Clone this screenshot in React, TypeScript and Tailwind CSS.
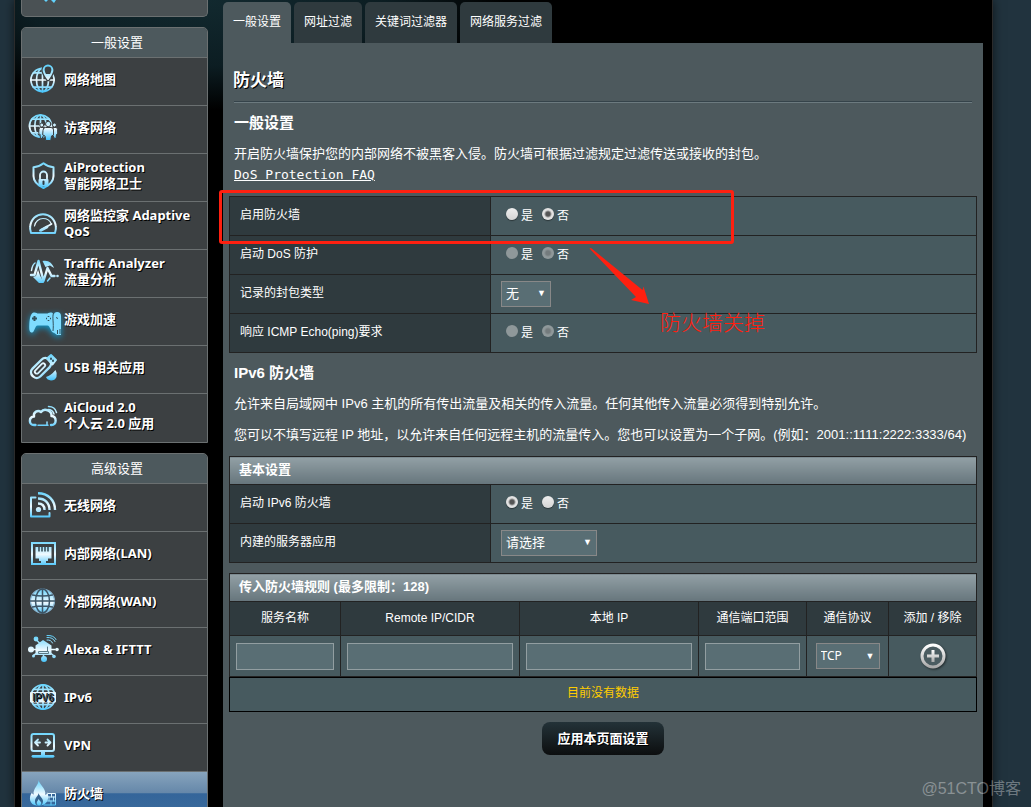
import type { ReactNode } from "react";

const FILL = "url(#ice)";

function Icon({ children }: { children: ReactNode }) {
  return (
    <svg
      viewBox="0 0 32 32"
      className="h-8 w-8 shrink-0 overflow-visible"
      fill="none"
      stroke={FILL}
      strokeWidth="2"
      strokeLinecap="round"
      strokeLinejoin="round"
      aria-hidden="true"
    >
      {children}
    </svg>
  );
}

function Globe({ x, y, r }: { x: number; y: number; r: number }) {
  const h = r * 0.62;
  const c = Math.sqrt(r * r - h * h);
  return (
    <g strokeWidth="1.700">
      <circle cx={x} cy={y} r={r} />
      <ellipse cx={x} cy={y} rx={r * 0.52} ry={r} />
      <path d={`M${x} ${y - r}V${y + r}M${x - r} ${y}H${x + r}M${x - c} ${y - h}H${x + c}M${x - c} ${y + h}H${x + c}`} />
    </g>
  );
}

const icons = {
  map: (
    <Icon>
      <Globe x={15.5} y={17} r={11.6} />
      <path d="M21 16C18.500 12 16.600 10 16.600 7a4.400 4.400 0 0 1 8.800 0C25.400 10 23.500 12 21 16Z" fill="#3c4042" stroke="#3c4042" strokeWidth="4.500" />
      <path d="M21 16C18.500 12 16.600 10 16.600 7a4.400 4.400 0 0 1 8.800 0C25.400 10 23.500 12 21 16Z" />
      <path d="M21 16 18.300 11h5.400Z" fill={FILL} stroke="none" />
    </Icon>
  ),
  guest: (
    <Icon>
      <Globe x={13.5} y={15} r={11} />
      <g fill={FILL} stroke="#3c4042" strokeWidth="1">
        <path d="M12 18q0-1.500 1.500-1.500h3v8l-1.500 3h-1.500l-.5-4-1-1Z" />
        <path d="M30.500 18q0-1.500-1.500-1.500h-3v8l1.500 3h1.500l.5-4 1-1Z" />
        <circle cx="14.800" cy="14" r="2" />
        <circle cx="27.500" cy="14" r="2" />
        <path d="M16 19q0-2.500 2.500-2.500h5.500q2.500 0 2.500 2.500v5l-2 1-.7 4.500h-5l-.8-4.500-2-1Z" />
        <circle cx="21.200" cy="13" r="2.700" />
      </g>
    </Icon>
  ),
  shield: (
    <Icon>
      <path d="M16.500 4.200C13 7 10 8 6.500 8.200V17c0 6 4.500 9.500 10 12 5.500-2.500 10-6 10-12V8.200C23 8 20 7 16.500 4.200Z" />
      <path d="M13 20v-4a3.500 3.500 0 0 1 7 0v4" strokeWidth="1.800" />
      <rect x="11.500" y="20" width="10" height="7.500" rx="1" fill={FILL} stroke="none" />
      <path d="M16.500 22.500v2.500" stroke="#2c3a42" strokeWidth="2" />
    </Icon>
  ),
  gauge: (
    <Icon>
      <path d="M4 26C3 23 3 20.500 3.200 19.500 4 12 9.500 7.200 16 7.200S28 12 28.800 19.500c.2 1 .2 3.500-.8 6.500Z" />
      <path d="M7.500 19c.8-4.500 4.500-7.500 8.500-7.500s7 2 8.300 5.500" strokeWidth="1.200" />
      <path d="M13 23.500 24.500 17" strokeWidth="1.800" />
      <path d="M14 23.300 20 20" strokeWidth="2.800" />
    </Icon>
  ),
  traffic: (
    <Icon>
      <path d="M4 20h3.500L11.500 6l5 20 4-13 4 8h3" strokeWidth="2.400" />
      <path d="M6 22l6 6h5l-4-7.500-2-6-2 6.500ZM15.500 6C21 4.500 25.500 8 27 13l-4-2.500-4.500 1.500Z" fill={FILL} stroke="none" />
      <path d="M4.500 15.500C5 12 6.500 9 8 8M20.500 26 23 23" strokeWidth="1.500" />
      <circle cx="30.500" cy="21" r="1.300" fill={FILL} stroke="none" />
    </Icon>
  ),
  game: (
    <svg viewBox="0 0 32 32" className="h-8 w-8 shrink-0 overflow-visible" aria-hidden="true">
      <g className="drop-shadow-[0_2px_3px_#109bd0]" fill="#7fdcff">
        <path d="M6.500 9.500C9 9 10 10.500 11 10.500h9c1 0 2-1.500 4.500-1 3 .5 4 6 4.500 12s-.5 8-2.500 8c-2.500 0-3.500-7-6-7h-10c-2.500 0-3 7-5.500 7S2 27 2.300 21.500 3.500 10.200 6.500 9.500Z" />
        <path d="M25.500 15c1-3 1.500-6 4.500-6 2.500 0 4 1.500 4 4v19h-4l-4-3Z" />
      </g>
      <g stroke="#31515e" fill="none">
        <path d="M5 15.500h5M7.500 13v5" strokeWidth="2" />
        <path d="M21.500 13v1M21.500 17v1M19 15.500h1M23 15.500h1" strokeWidth="1.600" />
        <path d="M26.500 10c-1.500 5 .5 10-.5 18M29.500 14l1 2M30.500 27v4M33 26v5" strokeWidth="1" />
      </g>
    </svg>
  ),
  usb: (
    <Icon>
      <rect x="2.500" y="11.500" width="23" height="11" rx="5" transform="rotate(-45 14 17)" strokeWidth="2.400" />
      <rect x="6.500" y="15.500" width="13" height="4" rx="2" transform="rotate(-45 13 17.500)" strokeWidth="1.800" />
      <path d="m20 7.500 4-3.500 5 5-3.500 4.500Z" fill={FILL} />
      <path d="M24 7.500v.5M26 9.500v.5" stroke="#31515e" />
      <path d="M19 26q5-1.500 9.500-7 2 3 1 7-1.500 3.500-5.500 3.500-4-.5-5-3.500Z" fill={FILL} stroke="none" />
    </Icon>
  ),
  cloud: (
    <Icon>
      <path d="M8.500 26H7c-5.500 0-5.500-8 0-8.500-1-4.500 4-7 7-4.500 3.500-4.500 11-1 10.500 4 5.500.5 5.500 9 0 9h-.5" strokeWidth="2.400" />
      <path d="M11 26.200h10M20 26v-3" strokeWidth="1.500" />
      <path d="M21 10.500c3 0 5 1.500 6 4.500M21.500 7.500c4 0 7 2 8 6" strokeWidth="1.500" />
    </Icon>
  ),
  wifi: (
    <Icon>
      <path d="M8.500 8.500H4v19h18.500V24" />
      <circle cx="11.500" cy="20.500" r="2.600" fill={FILL} stroke="none" />
      <path d="M11 14.500c4 0 6.500 2.500 6.500 6.500M11 9.500c7 0 11.500 4.500 11.500 11.500M11 4.200c10 0 17 7 17 16.800" strokeWidth="2.400" strokeLinecap="butt" />
    </Icon>
  ),
  lan: (
    <Icon>
      <rect x="5" y="6" width="23" height="21" strokeLinejoin="miter" />
      <path d="M8.500 10h16v11.500H21V24h-2v2.500h-5V24h-2v-2.500H8.500Z" fill={FILL} stroke="none" />
      <path d="M12 10v4.500M15 10v4.500M18 10v4.500M21 10v4.500" stroke="#31464f" strokeWidth="1.500" strokeLinecap="butt" />
    </Icon>
  ),
  wan: (
    <Icon>
      <circle cx="15.500" cy="16" r="12" fill={FILL} stroke="#8ab4cf" strokeWidth="1.200" />
      <g stroke="#3d5566" strokeWidth="1.500">
        <ellipse cx="15.500" cy="16" rx="7" ry="12" />
        <path d="M15.500 4v24M3.500 16h24M5.500 10q10 2 20 0M5.500 22q10-2 20 0" />
      </g>
    </Icon>
  ),
  alexa: (
    <Icon>
      <path d="M4 16.500h24M9 6.500l4 4M7 22l5-3M26 22l-4-3M16.500 20v6" strokeWidth="1.500" />
      <path d="M8.500 12.500 16 7l8.500 5.500V22h-16Z" fill={FILL} stroke="none" />
      <path d="M12 18.500h9.500v2H12ZM20.500 18v-4" stroke="#5c7b88" strokeWidth="1" />
      <circle cx="4" cy="16.500" r="3" fill={FILL} stroke="none" />
      <circle cx="9" cy="6" r="2.400" fill={FILL} stroke="none" />
      <circle cx="17" cy="26" r="3" fill={FILL} stroke="none" />
      <circle cx="6.500" cy="23" r="1.500" fill={FILL} stroke="none" />
      <circle cx="27" cy="23.500" r="1.800" fill={FILL} stroke="none" />
      <circle cx="30" cy="16.500" r="1.800" fill={FILL} stroke="none" />
      <path d="M20 7q4-.5 5.500 3M20 4.500q6-.5 8 4M20 2.500q7-.5 9 4" strokeWidth="1" />
    </Icon>
  ),
  ipv6: (
    <Icon>
      <Globe x={16} y={16} r={12.2} />
      <rect x="3" y="11" width="26" height="10.500" rx="1" fill="#e6f6fe" stroke="none" />
      <text x="16" y="20" textAnchor="middle" fontSize="10" fontWeight="700" fill="#2f4049" stroke="none" fontFamily="Liberation Sans, sans-serif">
        IPV6
      </text>
    </Icon>
  ),
  vpn: (
    <Icon>
      <rect x="4.500" y="5" width="22.500" height="17" rx="2" />
      <path d="M8 13.500h5M11 10.500l-3 3 3 3M23.500 13.500h-5M20.500 10.500l3 3-3 3" strokeWidth="1.800" />
      <path d="M16 23v4" strokeWidth="4" strokeLinecap="butt" />
      <path d="M6 27.300h20" strokeWidth="2.800" />
    </Icon>
  ),
  fire: (
    <Icon>
      <path d="M11.500 3c.5 4 7.500 8 7 15 1-.5 1.500-2 1.500-3 3 5 1 13-7 13.500H10C2 28 1.500 20 5 15.500c.5 1.500 1 2 1.500 2C6 11 12 8 11.500 3Z" fill={FILL} stroke="none" />
      <path d="M11.500 16c0 3-3.500 4.500-3.500 8s1.500 4.500 4 4.500 4-1.500 4-4.500-4-5-4.500-8Z" fill="#35648f" stroke="none" />
      <path d="M11.700 22c-1 2-2 2.500-2 4s1 2.500 2.300 2.500 2.300-1 2.300-2.500-2-2-2.600-4Z" fill={FILL} stroke="none" />
      <path d="M21 16.500h7.500v11.500H17M21 20h7.500M19 24h9.500M24.500 16.500V20M22 20v4M26.500 20v4M24 24v4" strokeWidth="1" />
    </Icon>
  ),
};

type Item = { icon: ReactNode; lines: string[]; active?: boolean };

const general: Item[] = [
  { icon: icons.map, lines: ["网络地图"] },
  { icon: icons.guest, lines: ["访客网络"] },
  { icon: icons.shield, lines: ["AiProtection", "智能网络卫士"] },
  { icon: icons.gauge, lines: ["网络监控家 Adaptive", "QoS"] },
  { icon: icons.traffic, lines: ["Traffic Analyzer", "流量分析"] },
  { icon: icons.game, lines: ["游戏加速"] },
  { icon: icons.usb, lines: ["USB 相关应用"] },
  { icon: icons.cloud, lines: ["AiCloud 2.0", "个人云 2.0 应用"] },
];

const advanced: Item[] = [
  { icon: icons.wifi, lines: ["无线网络"] },
  { icon: icons.lan, lines: ["内部网络(LAN)"] },
  { icon: icons.wan, lines: ["外部网络(WAN)"] },
  { icon: icons.alexa, lines: ["Alexa & IFTTT"] },
  { icon: icons.ipv6, lines: ["IPv6"] },
  { icon: icons.vpn, lines: ["VPN"] },
  { icon: icons.fire, lines: ["防火墙"], active: true },
];

function Menu({ title, items }: { title: string; items: Item[] }) {
  return (
    <nav className="rounded-t-[5px] border border-[#6b7071] bg-[#3c4042] pb-px">
      <h2 className="rounded-t-[4px] bg-[#4d595d] pl-[5px] text-center text-[13px] leading-[29px]">{title}</h2>
      <ul>
        {items.map((item) => (
          <li key={item.lines[0]} className="h-12 border-t border-[#6b7071]">
            <a
              href="#"
              className={
                "flex h-full items-center gap-[5px] pb-[6px] pl-[5px] font-['Noto_Sans','Noto_Sans_CJK_SC',sans-serif] text-[13px] leading-4 font-bold [text-shadow:1px_1px_0_#000] " +
                (item.active ? "bg-[linear-gradient(#87a4bd_0%,#6587a9_45%,#34659a_46%,#3c6c9c_100%)]" : "")
              }
            >
              {item.icon}
              <span className="whitespace-nowrap">
                {item.lines.map((line) => (
                  <span key={line} className="block">
                    {line}
                  </span>
                ))}
              </span>
            </a>
          </li>
        ))}
      </ul>
    </nav>
  );
}

function YesNo({ name, value, disabled }: { name: string; value?: "yes" | "no"; disabled?: boolean }) {
  const radio =
    "mb-1 h-3 w-3 appearance-none rounded-full bg-[linear-gradient(#eee,#d4d4d4)] shadow-[0_1px_1px_#0006] checked:bg-[radial-gradient(circle,#555_2px,#e2e2e2_4px)] disabled:bg-none disabled:bg-[#8f989a] disabled:shadow-none disabled:checked:bg-[radial-gradient(circle,#747b7d_2px,#8f989a_4px)]";
  return (
    <div className="flex gap-[9px] pl-[5px] leading-5">
      <label className="flex items-center gap-[3px]">
        <input type="radio" name={name} className={radio} defaultChecked={value === "yes"} disabled={disabled} />
        是
      </label>
      <label className="flex items-center gap-[3px]">
        <input type="radio" name={name} className={radio} defaultChecked={value === "no"} disabled={disabled} />
        否
      </label>
    </div>
  );
}

function Select({ label, value, className }: { label: string; value: string; className: string }) {
  return (
    <div className={"relative " + className}>
      <select
        aria-label={label}
        className="block h-[26px] w-full appearance-none rounded-none border border-[#888] bg-[#596e74] pl-1 text-white outline-none"
      >
        <option>{value}</option>
      </select>
      <span className="pointer-events-none absolute inset-y-0 right-[5px] flex items-center text-[9px]">▼</span>
    </div>
  );
}

function Row({ label, children }: { label: string; children: ReactNode }) {
  return (
    <tr className="h-[39px]">
      <th className="w-[261px] border border-[#222] bg-[#2f3a3e] pb-[3px] pl-[10px] text-left font-normal">{label}</th>
      <td className="border border-[#222] bg-[#475a5f] pl-[10px]">{children}</td>
    </tr>
  );
}

const bar = "h-[28px] border border-[#222] bg-[linear-gradient(#92a0a5,#66757c)] pb-px pl-[9px] text-left text-[13px] font-bold";

function Text({ children }: { children: ReactNode }) {
  return <p className="mt-[11px] px-[5px] text-[13px] leading-5">{children}</p>;
}

function Heading({ children }: { children: ReactNode }) {
  return <h2 className="mt-[10px] px-[5px] text-[15px] leading-5 font-bold">{children}</h2>;
}

const tabs = ["一般设置", "网址过滤", "关键词过滤器", "网络服务过滤"];
const columns = [
  { title: "服务名称", width: "w-[111px]", field: true },
  { title: "Remote IP/CIDR", width: "w-[179px]", field: true },
  { title: "本地 IP", width: "w-[179px]", field: true },
  { title: "通信端口范围", width: "w-[108px]", field: true },
  { title: "通信协议", width: "w-[82px]", field: false },
  { title: "添加 / 移除", width: "w-[88px]", field: false },
];

export default function App() {
  return (
    <div className="relative flex h-screen overflow-hidden bg-[#21333e] pr-[38px] pl-[14px] font-['Liberation_Sans','Noto_Sans_CJK_SC',sans-serif] text-[12px] text-white">
      <svg className="absolute h-0 w-0" aria-hidden="true">
        <defs>
          <linearGradient id="ice" gradientUnits="userSpaceOnUse" x1="0" y1="3" x2="0" y2="29">
            <stop offset="0" stopColor="#62d2fc" />
            <stop offset="0.55" stopColor="#f0faff" />
            <stop offset="1" stopColor="#46c4fb" />
          </linearGradient>
          <linearGradient id="steel" x1="0" y1="0" x2="0" y2="1">
            <stop offset="0" stopColor="#fff" />
            <stop offset="1" stopColor="#aaa" />
          </linearGradient>
        </defs>
      </svg>

      <div className="flex min-w-0 flex-1 gap-[15px] border-x border-[#2b2b2b] bg-black bg-[radial-gradient(ellipse_300px_110px_at_190px_0px,#12292f_0%,#0c1d22_60%,transparent_100%)] pr-[9px] pl-[6px] shadow-[0_0_10px_#0009]">
        <aside className="flex w-[187px] shrink-0 flex-col gap-[10px]">
          <div className="h-[17px] shrink-0 rounded-b-[5px] border border-t-0 border-[#6b7071] bg-[#4a5154] pl-[21px]">
            <svg viewBox="0 0 14 3" className="h-[3px] w-[14px]" aria-hidden="true">
              <path d="M1 0h4L3 2ZM8 0h5l-2 3Z" fill="#62d2fc" />
            </svg>
          </div>
          <Menu title="一般设置" items={general} />
          <Menu title="高级设置" items={advanced} />
        </aside>

        <main className="flex min-w-0 flex-1 flex-col pt-[2px]">
          <div className="flex gap-[3px]">
            {tabs.map((tab, i) => (
              <a
                key={tab}
                href="#"
                className={"h-[41px] rounded-t-[5px] px-[10px] leading-[41px] " + (i === 0 ? "bg-[#4d595d]" : "bg-[#2f3a3e]")}
              >
                {tab}
              </a>
            ))}
          </div>

          <div className="flex-1 bg-[#4d595d] px-[6px] pt-[26px]">
            <h1 className="px-1 text-[17px] leading-6 font-semibold [text-shadow:1px_1px_0_#000]">防火墙</h1>
            <hr className="mx-[5px] mt-2 h-[2px] border-t border-b border-t-[#35434a] border-b-[#6c7a7f]" />
            <Heading>一般设置</Heading>
            <Text>开启防火墙保护您的内部网络不被黑客入侵。防火墙可根据过滤规定过滤传送或接收的封包。</Text>
            <a href="#" className="mt-px ml-[5px] block w-fit font-['DejaVu_Sans_Mono',monospace] text-[13px] leading-5 underline">
              DoS Protection FAQ
            </a>

            <div className="relative mt-[11px]">
              <table className="w-full table-fixed border-collapse">
                <tbody>
                  <Row label="启用防火墙">
                    <YesNo name="firewall" value="no" />
                  </Row>
                  <Row label="启动 DoS 防护">
                    <YesNo name="dos" value="no" disabled />
                  </Row>
                  <Row label="记录的封包类型">
                    <Select label="记录的封包类型" value="无" className="w-[50px] text-[13px]" />
                  </Row>
                  <Row label="响应 ICMP Echo(ping)要求">
                    <YesNo name="icmp" value="no" disabled />
                  </Row>
                </tbody>
              </table>
              <div className="pointer-events-none absolute -top-[6px] -left-[10px] h-[54px] w-[515px] rounded-[3px] border-3 border-[#ff2010]" />
              <svg viewBox="0 0 60 58" className="pointer-events-none absolute top-[51px] left-[360px] h-[58px] w-[60px]" aria-hidden="true">
                <path d="M.5 1.500 2 1 53.500 43 54.500 39.500 60 57 42 53 47 50Z" fill="#ff2010" />
              </svg>
              <p className="pointer-events-none absolute top-[112px] left-[431px] text-[21px] leading-[30px] font-light text-[#ff2010]">
                防火墙关掉
              </p>
            </div>

            <Heading>IPv6 防火墙</Heading>
            <Text>允许来自局域网中 IPv6 主机的所有传出流量及相关的传入流量。任何其他传入流量必须得到特别允许。</Text>
            <Text>您可以不填写远程 IP 地址，以允许来自任何远程主机的流量传入。您也可以设置为一个子网。(例如：2001::1111:2222:3333/64)</Text>

            <table className="mt-[11px] w-full table-fixed border-collapse">
              <colgroup>
                <col className="w-[261px]" />
                <col />
              </colgroup>
              <thead>
                <tr>
                  <th colSpan={2} className={bar}>
                    基本设置
                  </th>
                </tr>
              </thead>
              <tbody>
                <Row label="启动 IPv6 防火墙">
                  <YesNo name="ipv6fw" value="yes" />
                </Row>
                <Row label="内建的服务器应用">
                  <Select label="内建的服务器应用" value="请选择" className="w-[96px] text-[13px]" />
                </Row>
              </tbody>
            </table>

            <table className="mt-[10px] w-full table-fixed border-collapse">
              <colgroup>
                {columns.map((c) => (
                  <col key={c.title} className={c.width} />
                ))}
              </colgroup>
              <thead>
                <tr>
                  <th colSpan={6} className={bar}>
                    传入防火墙规则 (最多限制：128)
                  </th>
                </tr>
                <tr className="h-[34px]">
                  {columns.map((c) => (
                    <th key={c.title} className="border border-[#222] bg-[#2f3a3e] pb-[2px] font-normal">
                      {c.title}
                    </th>
                  ))}
                </tr>
              </thead>
              <tbody>
                <tr className="h-[41px]">
                  {columns.map((c) => (
                    <td key={c.title} className="border border-[#222] bg-[#475a5f] px-[6px]">
                      {c.field && (
                        <input
                          type="text"
                          aria-label={c.title}
                          className="block h-[27px] w-full border border-[#929ea1] bg-[#596e74] px-1 text-white outline-none"
                        />
                      )}
                      {c.title === "通信协议" && (
                        <Select
                          label={c.title}
                          value="TCP"
                          className="mx-auto w-16 font-['Noto_Sans',sans-serif] text-[12px]"
                        />
                      )}
                      {c.title === "添加 / 移除" && (
                        <button type="button" aria-label="添加" className="mx-auto block h-7 w-7">
                          <svg viewBox="0 0 28 28" className="drop-shadow-[1px_1px_1px_#0008]" aria-hidden="true">
                            <circle cx="14" cy="14" r="11" fill="#4b5c61" stroke="url(#steel)" strokeWidth="3" />
                            <path d="M12.500 8h3v4.500H20v3h-4.500V20h-3v-4.500H8v-3h4.500Z" fill="url(#steel)" />
                          </svg>
                        </button>
                      )}
                    </td>
                  ))}
                </tr>
              </tbody>
            </table>
            <p className="border border-black bg-[#475a5f] pb-[2px] text-center leading-[31px] text-[#fc0]">目前没有数据</p>

            <button
              type="button"
              className="mx-auto mt-[10px] block h-[33px] w-[122px] rounded-[8px] bg-[linear-gradient(#233238,#0c0e0f)] text-[13px] font-bold [text-shadow:1px_1px_0_#000]"
            >
              应用本页面设置
            </button>
          </div>
        </main>
      </div>

      <span className="pointer-events-none absolute right-[10px] bottom-[6px] text-[16px] leading-6 text-white/35">@51CTO博客</span>
    </div>
  );
}
